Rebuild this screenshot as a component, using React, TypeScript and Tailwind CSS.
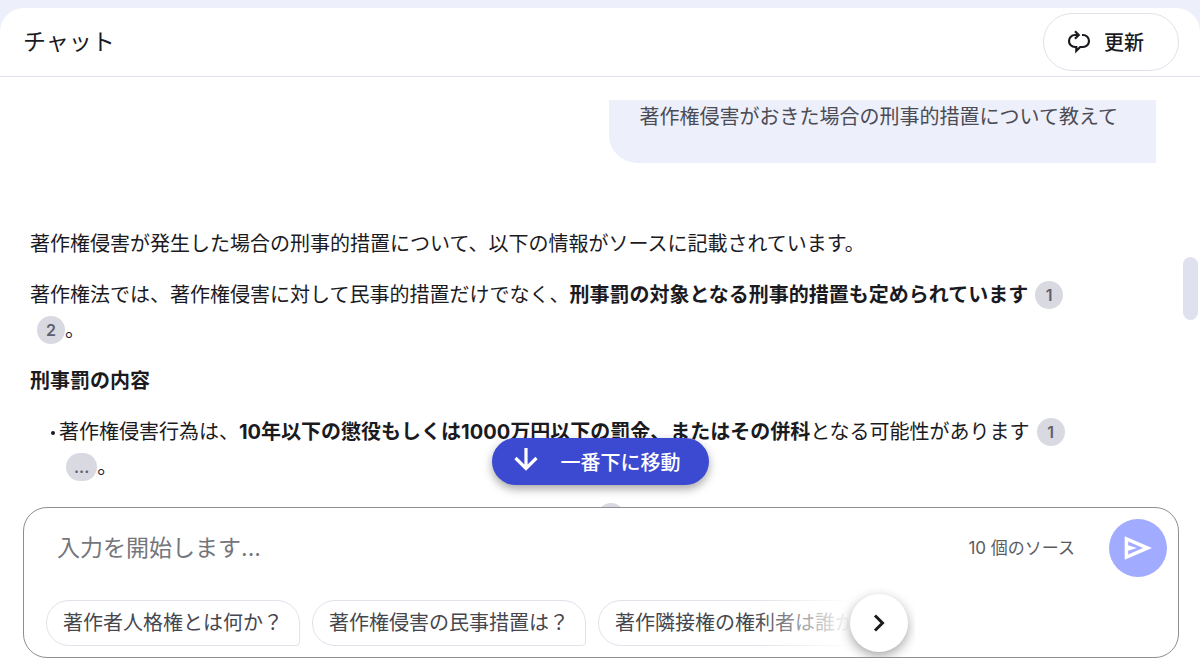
import React from 'react';

const suggestions = [
    '著作者人格権とは何か？',
    '著作権侵害の民事措置は？',
    '著作隣接権の権利者は誰か？',
];

const Citation: React.FC<{ label: string }> = ({ label }) => (
    <button className="ml-[7px] inline-flex h-7 min-w-7 items-center justify-center rounded-full bg-[#d9d9e2] px-2 align-[1px] text-base leading-7 font-semibold text-[#5d5f6e]">
        {label}
    </button>
);

const RefreshIcon: React.FC = () => (
    <svg className="h-6 w-6" viewBox="0 0 24 24" fill="none" stroke="currentColor" strokeWidth="2.2" aria-hidden="true">
        <path d="M15 5H16a6 6 0 0 1 0 12h-2.800L9.300 20.800V17H8A6 6 0 0 1 8 5h3" />
        <path d="M8 1.300 11.700 5 8 8.700" />
    </svg>
);

const SendIcon: React.FC = () => (
    <svg className="h-8 w-8" viewBox="0 0 24 24" fill="currentColor" aria-hidden="true">
        <path d="M2 20.800V3.200L22.500 12 2 20.800Zm2.600-3.900L15.800 12 4.600 7.100v2.900l6.600 2-6.600 2v2.900Z" />
    </svg>
);

const App: React.FC = () => {
    return (
        <div className="h-screen bg-[#edeffa] pt-2 font-[Inter,'Noto_Sans_CJK_JP',sans-serif] text-[#1b1b1f]">
            <div className="flex h-full flex-col rounded-t-3xl bg-white">
                <header className="flex items-center justify-between border-b border-[#e1e2ef] py-[5px] pr-[21px] pl-[23px]">
                    <h1 className="text-[23px] leading-8">チャット</h1>
                    <button className="flex h-[58px] items-center gap-[13px] rounded-full border border-[#e1e2ea] pr-[34px] pl-[23px] text-xl font-medium">
                        <RefreshIcon />
                        <span className="pt-[2px]">更新</span>
                    </button>
                </header>

                <main className="relative min-h-0 flex-1 pt-[23px]">
                    <div className="h-full overflow-hidden text-xl leading-[35px]">
                        <div className="flex justify-end pr-11">
                            <p className="rounded-bl-[28px] bg-[#edeffa] pr-[38px] pb-7 pl-[31px] text-[#4b4c55]">
                                著作権侵害がおきた場合の刑事的措置について教えて
                            </p>
                        </div>

                        <div className="space-y-4 pt-16 pr-[120px] pl-[30px]">
                            <p>著作権侵害が発生した場合の刑事的措置について、以下の情報がソースに記載されています。</p>
                            <p>
                                著作権法では、著作権侵害に対して民事的措置だけでなく、
                                <b>刑事罰の対象となる刑事的措置も定められています</b>
                                <Citation label="1" />
                                <Citation label="2" />。
                            </p>
                            <h2 className="font-bold">刑事罰の内容</h2>
                            <ul className="space-y-4 pl-[29px]">
                                <li className="relative before:absolute before:top-4 before:-left-2 before:h-1 before:w-1 before:rounded-full before:bg-current">
                                    著作権侵害行為は、
                                    <b>10年以下の懲役もしくは1000万円以下の罰金、またはその併科</b>
                                    となる可能性があります
                                    <Citation label="1" />
                                    <Citation label="..." />。
                                </li>
                                <li className="pt-[2px] pl-[538px]">
                                    <span className="block h-7 w-7 rounded-full bg-[#d9d9e2]" />
                                </li>
                            </ul>
                        </div>
                    </div>

                    {/* scrollbar thumb */}
                    <div className="absolute top-[180px] right-[2px] h-[63px] w-[15px] rounded-full bg-[#dfe2ee]" />

                    <div className="absolute inset-x-0 bottom-[22px] flex justify-center">
                        <button className="flex h-[47px] items-center gap-[22px] rounded-full bg-[#3b4ad0] pr-7 pl-[21px] text-xl font-medium text-white shadow-[0_4px_10px_rgba(0,0,0,0.35)]">
                            <svg className="mb-1 h-[26px] w-[26px]" viewBox="0 0 26 26" fill="none" stroke="currentColor" strokeWidth="3.2" aria-hidden="true">
                                <path d="M13 1v20M2.500 11 13 21.500 23.500 11" />
                            </svg>
                            <span className="pt-[2px]">一番下に移動</span>
                        </button>
                    </div>
                </main>

                <footer className="pr-[21px] pb-[2px] pl-[23px]">
                    <form className="rounded-3xl border border-[#8e8e93] pt-[11px] pr-[11px] pl-[22px]">
                        <div className="flex items-center">
                            <input
                                type="text"
                                aria-label="入力を開始します..."
                                placeholder="入力を開始します..."
                                className="min-w-0 flex-1 pl-[11px] text-[23px] leading-9 outline-none placeholder:text-[#75767c]"
                            />
                            <span className="pt-[2px] text-[17px] text-[#5b5c62]">10 個のソース</span>
                            <button type="button" aria-label="送信" className="ml-[34px] flex h-[58px] w-[58px] items-center justify-center rounded-full bg-[#a1abff] text-white">
                                <SendIcon />
                            </button>
                        </div>

                        <div className="relative mt-[11px] w-[77.5%] overflow-hidden pt-3 pb-[11px]">
                            <div className="flex gap-3">
                                {suggestions.map((text) => (
                                    <button
                                        key={text}
                                        type="button"
                                        className="h-[46px] shrink-0 rounded-[23px] rounded-br-[4px] border border-[#e1e2ea] px-4 text-xl whitespace-nowrap text-[#46474e]"
                                    >
                                        {text}
                                    </button>
                                ))}
                            </div>
                            <div className="absolute inset-y-0 right-0 flex w-40 items-center justify-end bg-linear-to-r from-transparent to-white to-60% pr-[7px]">
                                <button type="button" aria-label="次へ" className="flex h-[58px] w-[58px] items-center justify-center rounded-full bg-white shadow-[0_4px_12px_rgba(0,0,0,0.35)]">
                                    <svg className="h-6 w-6" viewBox="0 0 24 24" fill="none" stroke="currentColor" strokeWidth="3" aria-hidden="true">
                                        <path d="m8 4.500 7.500 7.500L8 19.500" />
                                    </svg>
                                </button>
                            </div>
                        </div>
                    </form>
                </footer>
            </div>
        </div>
    );
};

export default App;
